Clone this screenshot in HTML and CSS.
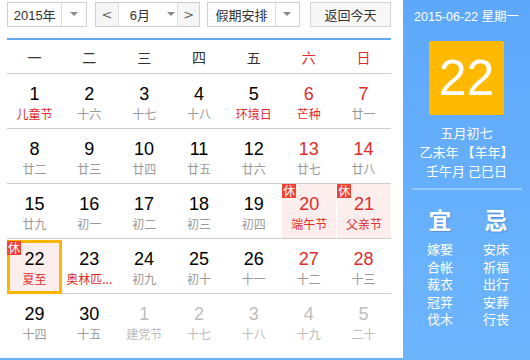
FILE: index.html
```html
<!DOCTYPE html>
<html lang="zh">
<head>
<meta charset="utf-8">
<link rel="stylesheet" href="styles.css">
</head>
<body>
<div class="widget">
  <div class="left">
    <div class="toolbar">
      <div class="sel sel-year"><span class="sel-text">2015年</span><span class="sel-arrow"><i class="caret"></i></span></div>
      <div class="month-group">
        <span class="nav">&lt;</span>
        <span class="sel-month"><span class="m-text">6月</span><i class="caret"></i></span>
        <span class="nav nav-next">&gt;</span>
      </div>
      <div class="sel sel-hol"><span class="sel-text">假期安排</span><span class="sel-arrow"><i class="caret"></i></span></div>
      <div class="btn-today">返回今天</div>
    </div>
    <div class="weekdays">
      <span>一</span><span>二</span><span>三</span><span>四</span><span>五</span><span class="we">六</span><span class="we">日</span>
    </div>
    <div class="grid">
      <div class="cell"><b>1</b><s class="red">儿童节</s></div>
      <div class="cell"><b>2</b><s>十六</s></div>
      <div class="cell"><b>3</b><s>十七</s></div>
      <div class="cell"><b>4</b><s>十八</s></div>
      <div class="cell"><b>5</b><s class="red">环境日</s></div>
      <div class="cell wk"><b>6</b><s class="red">芒种</s></div>
      <div class="cell wk"><b>7</b><s>廿一</s></div>

      <div class="cell"><b>8</b><s>廿二</s></div>
      <div class="cell"><b>9</b><s>廿三</s></div>
      <div class="cell"><b>10</b><s>廿四</s></div>
      <div class="cell"><b>11</b><s>廿五</s></div>
      <div class="cell"><b>12</b><s>廿六</s></div>
      <div class="cell wk"><b>13</b><s>廿七</s></div>
      <div class="cell wk"><b>14</b><s>廿八</s></div>

      <div class="cell"><b>15</b><s>廿九</s></div>
      <div class="cell"><b>16</b><s>初一</s></div>
      <div class="cell"><b>17</b><s>初二</s></div>
      <div class="cell"><b>18</b><s>初三</s></div>
      <div class="cell"><b>19</b><s>初四</s></div>
      <div class="cell wk hol"><em class="rest">休</em><b>20</b><s class="red">端午节</s></div>
      <div class="cell wk hol"><em class="rest">休</em><b>21</b><s class="red">父亲节</s></div>

      <div class="cell today"><em class="rest">休</em><b>22</b><s class="red">夏至</s></div>
      <div class="cell"><b>23</b><s class="red">奥林匹...</s></div>
      <div class="cell"><b>24</b><s>初九</s></div>
      <div class="cell"><b>25</b><s>初十</s></div>
      <div class="cell"><b>26</b><s>十一</s></div>
      <div class="cell wk"><b>27</b><s>十二</s></div>
      <div class="cell wk"><b>28</b><s>十三</s></div>

      <div class="cell last"><b>29</b><s>十四</s></div>
      <div class="cell last"><b>30</b><s>十五</s></div>
      <div class="cell last other"><b>1</b><s>建党节</s></div>
      <div class="cell last other"><b>2</b><s>十七</s></div>
      <div class="cell last other"><b>3</b><s>十八</s></div>
      <div class="cell last other"><b>4</b><s>十九</s></div>
      <div class="cell last other"><b>5</b><s>二十</s></div>
    </div>
  </div>
  <div class="right">
    <div class="date-line">2015-06-22 星期一</div>
    <div class="big-day">22</div>
    <div class="lunar">
      <div>五月初七</div>
      <div>乙未年 【羊年】</div>
      <div>壬午月 己巳日</div>
    </div>
    <div class="sep"></div>
    <div class="yiji">
      <div class="col">
        <div class="yj-title">宜</div>
        <div>嫁娶</div><div>合帐</div><div>裁衣</div><div>冠笄</div><div>伐木</div>
      </div>
      <div class="col">
        <div class="yj-title">忌</div>
        <div>安床</div><div>祈福</div><div>出行</div><div>安葬</div><div>行丧</div>
      </div>
    </div>
  </div>
</div>
</body>
</html>
```

FILE: styles.css
```css
* { box-sizing: border-box; }
html, body { margin: 0; padding: 0; background: #fff; }
body {
  font-family: "Liberation Sans", Arial, "Noto Sans CJK SC", sans-serif;
  color: #333;
  width: 530px;
  height: 360px;
  overflow: hidden;
}
.widget {
  display: flex;
  width: 530px;
  height: 360px;
  border-bottom: 2px solid #6aaef5;
}
.left {
  width: 400px;
  padding: 0 9px 0 7px;
}
.toolbar {
  display: flex;
  align-items: center;
  height: 40px;
  padding-bottom: 10px;
  border-bottom: 2px solid #62a8f2;
  font-size: 13px;
}
.sel {
  display: flex;
  height: 25px;
  border: 1px solid #cfcfcf;
  background: #fff;
}
.sel-text {
  display: flex;
  align-items: center;
  justify-content: center;
  border-right: 1px solid #dcdcdc;
}
.sel-arrow {
  display: flex;
  align-items: center;
  justify-content: center;
  width: 24px;
}
.caret {
  width: 0; height: 0;
  border-left: 4px solid transparent;
  border-right: 4px solid transparent;
  border-top: 4px solid #888;
}
.sel-year { width: 80px; }
.sel-year .sel-text { width: 55px; }
.month-group {
  display: flex;
  margin-left: 8px;
  height: 25px;
  width: 105px;
  border: 1px solid #cfcfcf;
}
.nav {
  width: 22px;
  display: flex;
  align-items: center;
  justify-content: center;
  background: #f5f5f5;
  color: #666;
  font-family: "DejaVu Sans", sans-serif;
  font-size: 13px;
}
.nav-next { border-left: 1px solid #dcdcdc; }
.sel-month {
  width: 60px;
  display: flex;
  align-items: center;
  border-left: 1px solid #dcdcdc;
  padding-left: 11px;
}
.sel-month .m-text { width: 37px; }
.sel-hol { margin-left: 7px; width: 93px; }
.sel-hol .sel-text { width: 70px; }
.btn-today {
  margin-left: 10px;
  width: 82px;
  height: 25px;
  display: flex;
  align-items: center;
  justify-content: center;
  border: 1px solid #d3d3d3;
  background: #f7f7f7;
}
.weekdays {
  display: grid;
  grid-template-columns: repeat(7, 1fr);
  height: 34px;
  border-bottom: 1px solid #cdcdcd;
  font-size: 14px;
  font-family: "Noto Sans CJK SC", sans-serif;
}
.weekdays span {
  display: flex;
  align-items: center;
  justify-content: center;
  color: #333;
}
.weekdays .we { color: #e12b2b; }
.grid {
  display: grid;
  grid-template-columns: repeat(7, 1fr);
  grid-auto-rows: 55px;
}
.cell {
  position: relative;
  display: flex;
  flex-direction: column;
  align-items: center;
  border-bottom: 1px solid #cdcdcd;
  padding-top: 9px;
}
.cell.last { border-bottom: none; }
.cell b {
  font-weight: normal;
  font-size: 18px;
  line-height: 22px;
  color: #000;
  font-family: "Liberation Sans", Arial, sans-serif;
}
.cell s {
  text-decoration: none;
  font-size: 12px;
  line-height: 16px;
  margin-top: 1px;
  color: #999;
  font-family: "Noto Sans CJK SC", sans-serif;
  white-space: nowrap;
}
.cell s.red { color: #e12b2b; }
.cell.wk b { color: #e12b2b; }
.cell.other b, .cell.other s { color: #bdbdbd; }
.cell.hol {
  background: #fdeeee;
  border-left: 1px solid #fff;
}
.cell.today {
  background: #fdeeee;
  margin-top: 1px;
  border: 3px solid #ffb400;
  padding-top: 5px;
}
.rest {
  position: absolute;
  top: 0;
  left: 0;
  width: 14px;
  height: 14px;
  background: #f24236;
  color: #fff;
  font-style: normal;
  font-size: 12px;
  line-height: 14px;
  text-align: center;
  font-family: "Noto Sans CJK SC", sans-serif;
}
.cell.today .rest { top: -2px; left: -3px; }
.right {
  margin-left: 3px;
  width: 127px;
  height: 360px;
  background: linear-gradient(#5ea8fb, #6db5fd);
  color: #fff;
  display: flex;
  flex-direction: column;
  align-items: center;
  font-family: "Noto Sans CJK SC", sans-serif;
}
.date-line {
  margin-top: 8px;
  font-size: 12.5px;
  line-height: 18px;
  font-family: "Liberation Sans", Arial, "Noto Sans CJK SC", sans-serif;
}
.big-day {
  margin-top: 15px;
  width: 75px;
  height: 74px;
  background: #ffb900;
  border-radius: 2px;
  font-size: 50px;
  line-height: 74px;
  text-align: center;
  font-family: "Liberation Sans", Arial, sans-serif;
}
.lunar {
  margin-top: 8px;
  font-size: 13px;
  line-height: 19px;
  text-align: center;
}
.sep {
  margin-top: 8px;
  width: 110px;
  height: 2px;
  background: #98c9fb;
}
.yiji {
  display: flex;
  gap: 30px;
  margin-top: 14px;
  padding-left: 3px;
}
.col {
  display: flex;
  flex-direction: column;
  align-items: center;
  font-size: 13px;
  line-height: 17.6px;
}
.yj-title {
  font-size: 23px;
  line-height: 30px;
  font-weight: bold;
  margin-bottom: 6px;
  text-shadow: 1px 1px 1px rgba(60, 100, 170, 0.45);
}
```
